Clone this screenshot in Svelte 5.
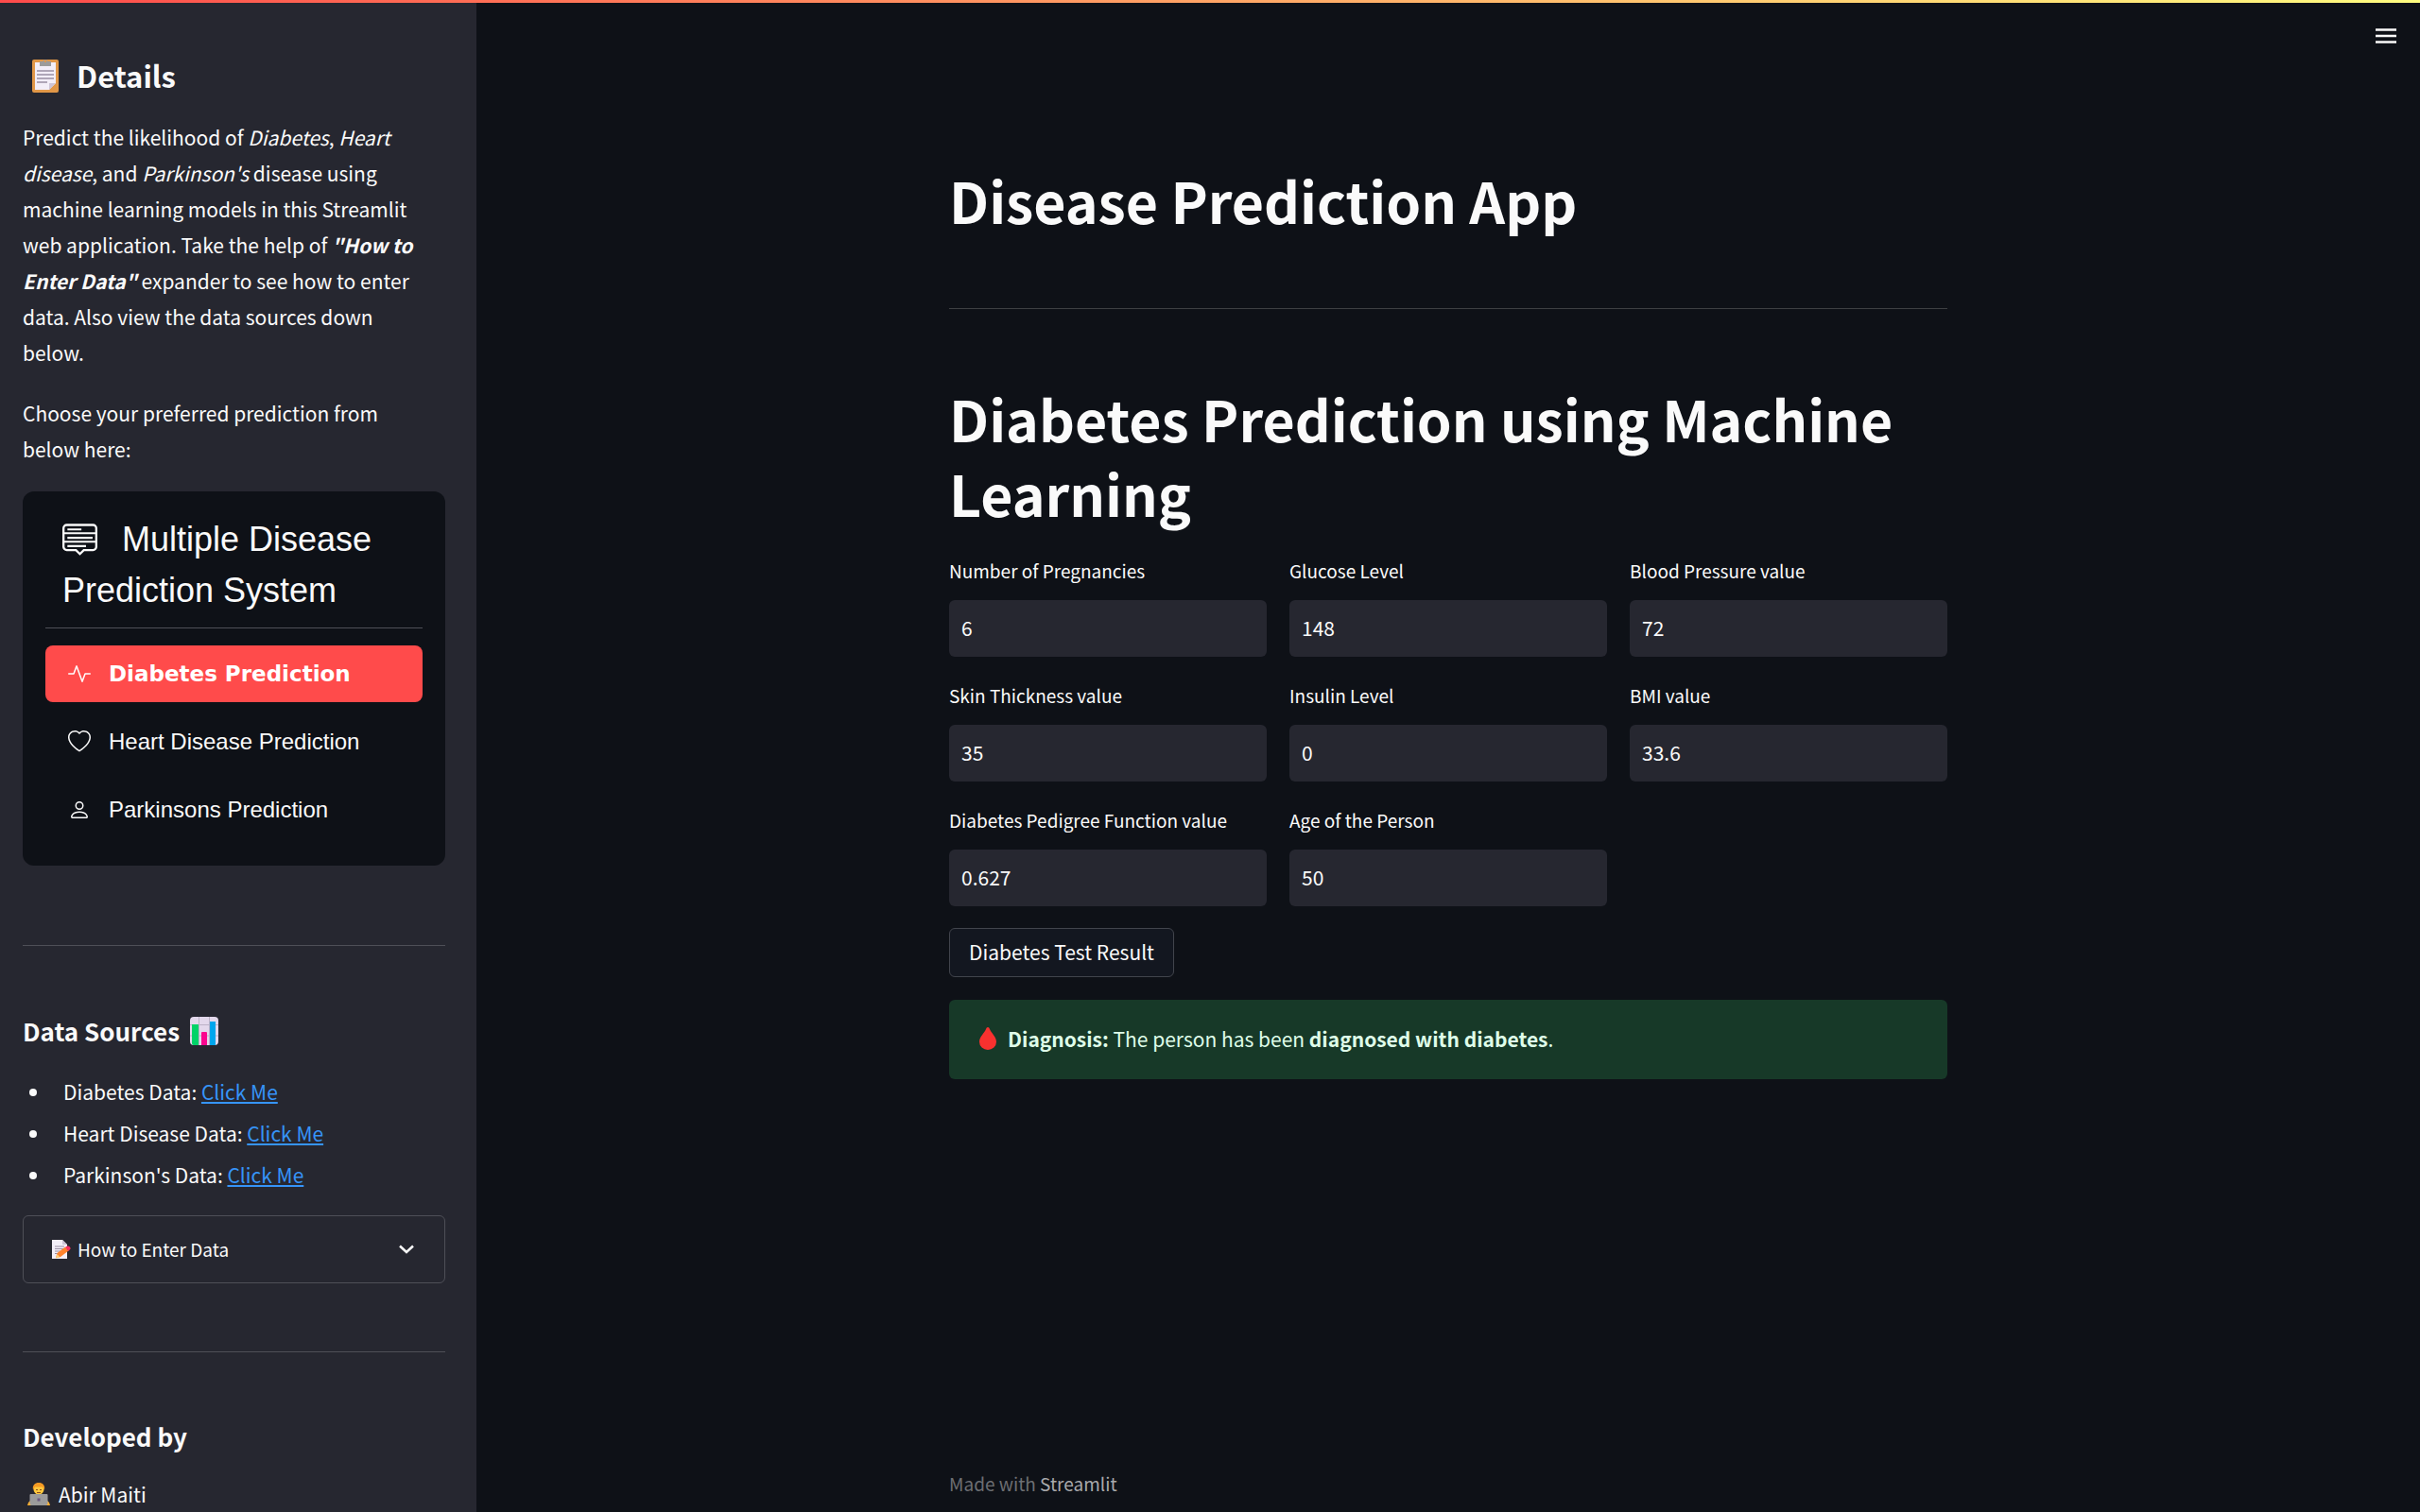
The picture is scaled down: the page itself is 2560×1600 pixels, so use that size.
<script>
  let selected = $state('Diabetes Prediction');

  const options = [
    { name: 'Diabetes Prediction', icon: 'activity' },
    { name: 'Heart Disease Prediction', icon: 'heart' },
    { name: 'Parkinsons Prediction', icon: 'person' }
  ];

  const sources = ['Diabetes Data', 'Heart Disease Data', "Parkinson's Data"];

  let fields = $state([
    { id: 'pregnancies', label: 'Number of Pregnancies', value: '6' },
    { id: 'glucose', label: 'Glucose Level', value: '148' },
    { id: 'pressure', label: 'Blood Pressure value', value: '72' },
    { id: 'skin', label: 'Skin Thickness value', value: '35' },
    { id: 'insulin', label: 'Insulin Level', value: '0' },
    { id: 'bmi', label: 'BMI value', value: '33.6' },
    { id: 'pedigree', label: 'Diabetes Pedigree Function value', value: '0.627' },
    { id: 'age', label: 'Age of the Person', value: '50' }
  ]);
</script>

<div class="app">
  <div class="decoration"></div>

  <aside class="sidebar">
    <h2 class="details">
      <svg class="clipboard" viewBox="0 0 28 36" aria-hidden="true">
        <rect y="1" width="28" height="35" rx="2" fill="#e19747" />
        <path d="M3 4h22v22l-7 7H3z" fill="#f3eef8" />
        <path d="M18 33v-7h7z" fill="#cdc4d6" />
        <path d="M8 3h3.500a2.600 2.600 0 0 1 5 0H20v5H8z" fill="#9b9b9b" />
        <circle cx="14" cy="2.800" r="1.200" fill="#e19747" />
        <path d="M5 13h18M5 17h18M5 21h18M5 25h11" stroke="#998ea3" stroke-width="1.300" />
      </svg>
      Details
    </h2>
    <p>
      Predict the likelihood of <em>Diabetes</em>, <em>Heart disease</em>, and <em>Parkinson's</em>
      disease using machine learning models in this Streamlit web application. Take the help of
      <em><strong>"How to Enter Data"</strong></em> expander to see how to enter data. Also view the
      data sources down below.
    </p>
    <p>Choose your preferred prediction from below here:</p>

    <nav class="menu" aria-label="Prediction">
      <div class="menu-title">
        <svg class="menu-icon" viewBox="0 0 16 16" fill="none" stroke="currentColor" aria-hidden="true">
          <path d="M2 1.500h12a1.500 1.500 0 0 1 1.500 1.500v8.500a1.500 1.500 0 0 1-1.500 1.500h-4.200L8 14.800 6.200 13H2a1.500 1.500 0 0 1-1.500-1.500V3A1.500 1.500 0 0 1 2 1.500z" />
          <path d="M.5 5.300h15M.5 9.200h15" stroke-width="0.900" />
          <path d="M2.300 3.600h6.400M2.300 7.400h11.500M2.300 11.200h8.500" stroke-width="0.900" />
        </svg>
        Multiple Disease Prediction System
      </div>
      <hr />
      <div class="options">
        {#each options as option}
          <button
            class="option"
            class:active={selected === option.name}
            onclick={() => (selected = option.name)}
          >
            <svg viewBox="0 0 16 16" fill="currentColor" aria-hidden="true">
              {#if option.icon === 'activity'}
                <path fill-rule="evenodd" d="M6 2a.5.5 0 0 1 .47.33L10 12.036l1.530-4.208A.5.5 0 0 1 12 7.500h3.500a.5.5 0 0 1 0 1h-3.150l-1.880 5.170a.5.5 0 0 1-.94 0L6 3.964 4.470 8.171A.5.5 0 0 1 4 8.500H.5a.5.5 0 0 1 0-1h3.150l1.880-5.170A.5.5 0 0 1 6 2Z" />
              {:else if option.icon === 'heart'}
                <path d="m8 2.748-.717-.737C5.600.281 2.514.878 1.400 3.053c-.523 1.023-.641 2.500.314 4.385.92 1.815 2.834 3.989 6.286 6.357 3.452-2.368 5.365-4.542 6.286-6.357.955-1.886.838-3.362.314-4.385C13.486.878 10.400.28 8.717 2.010L8 2.748zM8 15C-7.333 4.868 3.279-3.040 7.824 1.143c.06.055.119.112.176.171a3.120 3.120 0 0 1 .176-.17C12.720-3.042 23.333 4.867 8 15z" />
              {:else}
                <path d="M8 8a3 3 0 1 0 0-6 3 3 0 0 0 0 6Zm2-3a2 2 0 1 1-4 0 2 2 0 0 1 4 0Zm4 8c0 1-1 1-1 1H3s-1 0-1-1 1-4 6-4 6 3 6 4Zm-1-.004c-.001-.246-.154-.986-.832-1.664C11.516 10.680 10.289 10 8 10c-2.290 0-3.516.68-4.168 1.332-.678.678-.83 1.418-.832 1.664h10Z" />
              {/if}
            </svg>
            {option.name}
          </button>
        {/each}
      </div>
    </nav>

    <hr class="divider after-menu" />

    <h3>
      Data Sources
      <svg class="chart" viewBox="0 0 30 30" aria-hidden="true">
        <rect width="30" height="30" rx="4" fill="#e3d8ec" />
        <path d="M9.500 0v30M20.500 0v30M0 8.500h30M0 20h30" stroke="#bdb2c7" />
        <path d="M2 8h7v22H4a2 2 0 0 1-2-2z" fill="#00d368" />
        <path d="M12 17a1 1 0 0 1 1-1h4a1 1 0 0 1 1 1v13h-6z" fill="#fb058e" />
        <path d="M21 5h6v25h-6z" fill="#00a6ed" />
      </svg>
    </h3>
    <ul>
      {#each sources as source}
        <li>{source}: <a href="#{source}">Click Me</a></li>
      {/each}
    </ul>

    <details class="expander">
      <summary>
        <svg class="memo" viewBox="0 0 20 20" aria-hidden="true">
          <path d="M0 0h11l5 5v15H0z" fill="#f3eef8" />
          <path d="M11 0l5 5h-5z" fill="#cdc4d6" />
          <path d="M3 7h10M3 9.500h9M3 12h6M3 14.500h4" stroke="#998ea3" />
          <path d="M4 19l1.500-5L14 7.500l3.500 4L9 18z" fill="#ff822d" />
          <path d="M4 19.500l1.500-4.500 3 3.500z" fill="#ffce7c" />
          <path d="M14 8l2-1.500c2-.5 4 1.500 3.500 3L17.500 12z" fill="#f92f60" />
        </svg>
        <span>How to Enter Data</span>
        <svg class="chevron" viewBox="0 0 16 10" fill="none" stroke="currentColor" stroke-width="2.500" aria-hidden="true">
          <path d="M1 1.500l7 6.500 7-6.500" />
        </svg>
      </summary>
    </details>

    <hr class="divider" />

    <h3>Developed by</h3>
    <p class="author">
      <svg class="coder" viewBox="0 0 24 24" aria-hidden="true">
        <path d="M0 24l1-3 4-4h14l4 4 1 3z" fill="#ffb02e" />
        <circle cx="12" cy="7" r="5.500" fill="#ffc83d" />
        <path d="M6 7.500C5 2.500 8 0 12 0s7 2.500 6 7.500l-2-3H8z" fill="#f59a23" />
        <path d="M9 7.500h2M13 7.500h2M10 10.500h4" stroke="#8a4b20" />
        <path d="M2.500 13a1 1 0 0 1 1-1h17a1 1 0 0 1 1 1v9a2 2 0 0 1-2 2h-15a2 2 0 0 1-2-2z" fill="#9b9b9b" />
        <path d="M10.500 16.500h3v3h-3z" fill="#6d5a80" />
      </svg>
      Abir Maiti
    </p>
  </aside>

  <main>
    <button class="hamburger" aria-label="Main menu">
      <svg viewBox="0 0 24 16" stroke="currentColor" stroke-width="2.500" aria-hidden="true">
        <path d="M1 1.500h22M1 8h22M1 14.500h22" />
      </svg>
    </button>

    <div class="container">
      <h1>Disease Prediction App</h1>
      <hr class="rule" />
      <h1>Diabetes Prediction using Machine Learning</h1>

      <form onsubmit={(e) => e.preventDefault()}>
        <div class="fields">
          {#each fields as field}
            <div class="field">
              <label for={field.id}>{field.label}</label>
              <input id={field.id} type="text" bind:value={field.value} />
            </div>
          {/each}
        </div>
        <button class="submit" type="submit">Diabetes Test Result</button>
      </form>

      <div class="alert" role="alert">
        <svg class="drop" viewBox="0 0 18 24" aria-hidden="true">
          <path d="M9 0c1 0 1.500.8 2 2 1.800 4.500 7 8 7 13.500a9 8.500 0 0 1-18 0C0 10 5.200 6.500 7 2c.5-1.200 1-2 2-2z" fill="#f8312f" />
        </svg>
        <span><strong>Diagnosis:</strong> The person has been <strong>diagnosed with diabetes</strong>.</span>
      </div>

      <footer>Made with <a href="#streamlit">Streamlit</a></footer>
    </div>
  </main>
</div>

<style>
  :global(body) {
    background: #0e1117;
  }

  .app {
    display: flex;
    height: 100vh;
    overflow: hidden;
    color: #fafafa;
    font-family: 'Noto Sans CJK SC', 'Noto Sans', sans-serif;
    font-size: 21px;
    line-height: 38px;
  }

  .app * {
    box-sizing: border-box;
  }

  .decoration {
    position: absolute;
    top: 0;
    left: 0;
    right: 0;
    height: 3px;
    background: linear-gradient(90deg, #ff4b4b, #fffd80);
  }

  h1,
  h2,
  h3,
  p,
  ul {
    margin: 0;
  }

  hr {
    margin: 0;
    border: 0;
    border-top: 1px solid #4e4f57;
  }

  button,
  input {
    font: inherit;
    color: inherit;
  }

  .sidebar {
    flex: none;
    width: 504px;
    padding: 58px 33px 0 24px;
    overflow: hidden;
    background: #262730;
  }

  .details {
    display: flex;
    align-items: center;
    gap: 19px;
    margin-bottom: 25px;
    padding-left: 10px;
    font-size: 31px;
    line-height: 43px;
    font-weight: 600;
  }

  .clipboard {
    width: 28px;
    height: 36px;
  }

  .sidebar p {
    margin-bottom: 26px;
    padding-right: 12px;
  }

  .menu {
    padding: 24px 24px 29px;
    border-radius: 12px;
    background: #0e1117;
    font-family: 'Liberation Sans', Arial, sans-serif;
  }

  .menu-title {
    padding: 0 18px;
    font-size: 36px;
    line-height: 54px;
  }

  .menu-icon {
    width: 37px;
    height: 37px;
    margin-right: 16px;
    vertical-align: -6px;
  }

  .menu hr {
    margin: 12px 0 18px;
  }

  .options {
    display: grid;
    gap: 12px;
  }

  .option {
    display: flex;
    align-items: center;
    gap: 19px;
    height: 60px;
    padding: 0 24px;
    border: 0;
    border-radius: 8px;
    background: none;
    font-size: 24px;
    text-align: left;
    cursor: pointer;
  }

  .option svg {
    width: 24px;
    height: 24px;
  }

  .option.active {
    background: #ff4b4b;
    color: #ffffff;
    font-family: 'Arial Black', 'DejaVu Sans', sans-serif;
    font-size: 23px;
    font-weight: 900;
  }

  .divider {
    margin: 72px 0 71px;
  }

  .after-menu {
    margin: 84px 0 72px;
  }

  h3 {
    display: flex;
    align-items: center;
    gap: 11px;
    margin-bottom: 24px;
    font-size: 26px;
    line-height: 36px;
    font-weight: 600;
  }

  .chart {
    width: 30px;
    height: 30px;
  }

  ul {
    display: grid;
    gap: 6px;
    margin: 27px 0 24px;
    padding-left: 30px;
  }

  li {
    padding-left: 13px;
  }

  a {
    color: #3694f8;
  }

  .expander {
    border: 1px solid #4e4f57;
    border-radius: 6px;
    font-size: 19px;
  }

  summary {
    display: flex;
    align-items: center;
    gap: 7px;
    height: 70px;
    padding: 0 32px 0 30px;
    cursor: pointer;
  }

  summary span {
    flex: 1;
  }

  .memo {
    width: 20px;
    height: 20px;
  }

  .chevron {
    width: 16px;
    height: 10px;
  }

  .author {
    display: flex;
    align-items: center;
    gap: 9px;
    padding-left: 5px;
  }

  .coder {
    width: 24px;
    height: 24px;
  }

  main {
    position: relative;
    flex: 1;
    display: flex;
    justify-content: center;
  }

  .hamburger {
    position: absolute;
    top: 24px;
    right: 18px;
    display: flex;
    padding: 6px;
    border: 0;
    background: none;
    cursor: pointer;
  }

  .hamburger svg {
    width: 24px;
    height: 16px;
  }

  .container {
    display: flex;
    flex-direction: column;
    width: 100%;
    max-width: 1056px;
    padding: 172px 0 15px;
  }

  h1 {
    font-size: 59px;
    line-height: 79px;
    font-weight: 700;
  }

  .rule {
    margin: 75px 0 76px;
    border-color: #3d3f42;
  }

  .fields {
    display: grid;
    grid-template-columns: repeat(3, 1fr);
    gap: 26px 24px;
    margin: 28px 0 23px;
  }

  .field {
    display: grid;
    gap: 16px;
  }

  label,
  footer {
    font-size: 19px;
    line-height: 30px;
  }

  input {
    width: 100%;
    height: 60px;
    padding: 0 13px 2px;
    border: 0;
    border-radius: 6px;
    background: #262730;
  }

  .submit {
    display: block;
    height: 52px;
    padding: 0 20px 2px;
    border: 1px solid #41444c;
    border-radius: 6px;
    background: #131720;
    line-height: 38px;
    cursor: pointer;
  }

  .alert {
    display: flex;
    align-items: center;
    gap: 12px;
    height: 84px;
    margin-top: 24px;
    padding: 0 32px 2px;
    border-radius: 6px;
    background: #173928;
    color: #dffde9;
  }

  .drop {
    width: 18px;
    height: 24px;
  }

  strong {
    font-weight: 600;
  }

  footer {
    margin-top: auto;
    color: #6c6e72;
  }

  footer a {
    color: #a8a9ab;
    text-decoration: none;
  }
</style>
